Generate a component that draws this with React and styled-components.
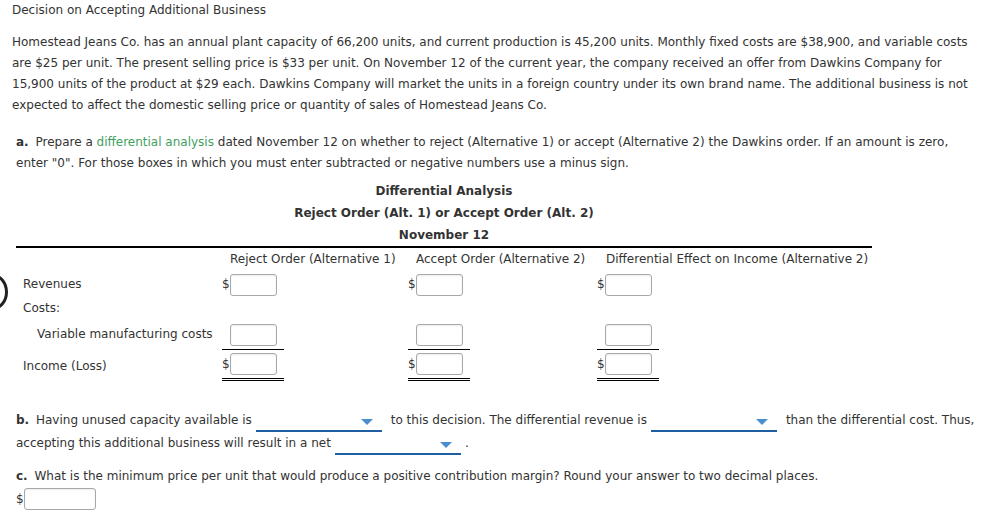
import styled, { createGlobalStyle } from "styled-components";

const GlobalStyle = createGlobalStyle`
  body {
    margin: 0;
    background: #fff;
    font-family: "DejaVu Sans", Verdana, sans-serif;
    font-size: 12px;
    color: #333;
  }
`;

const Page = styled.div`
  position: relative;
  padding: 1px 6px 0 12px;
  overflow: hidden;
  height: 529px;
`;

const SideRing = styled.div`
  position: absolute;
  left: -22px;
  top: 274px;
  width: 24px;
  height: 30px;
  border: 3px solid #222;
  border-radius: 50%;
`;

const Title = styled.div`
  line-height: 19px;
`;

const Para = styled.p`
  margin: 12px 0 0;
  line-height: 21px;
`;

const Part = styled.div`
  padding-left: 4px;
  margin-top: ${(p) => p.$top || 0}px;
  line-height: ${(p) => p.$lh || 21}px;
`;

const Letter = styled.b`
  margin-right: 3px;
`;

const Link = styled.span`
  color: #3f9f5f;
`;

const Heading = styled.div`
  width: 856px;
  text-align: center;
  font-weight: bold;
  line-height: 22px;
  &:first-child {
    margin-top: 6px;
  }
`;

const Table = styled.div`
  width: 856px;
`;

const Rule = styled.div`
  height: 2px;
  background: #000;
`;

const Row = styled.div`
  display: flex;
  align-items: center;
  height: ${(p) => p.$h}px;
`;

const Label = styled.div`
  width: ${(p) => (p.$indent ? 185 : 199)}px;
  padding-left: ${(p) => (p.$indent ? 21 : 7)}px;
  white-space: nowrap;
  margin-top: ${(p) => p.$shift || 0}px;
`;

const Col = styled.div`
  width: ${(p) => p.$w}px;
  padding-left: ${(p) => p.$pad || 0}px;
  box-sizing: border-box;
  white-space: nowrap;
`;

const Amount = styled.div`
  display: inline-flex;
  align-items: center;
  width: 62px;
  box-sizing: border-box;
  padding-bottom: ${(p) => (p.$line ? 3 : 0)}px;
  border-bottom: ${(p) =>
    p.$line === "double" ? "3px double #000" : p.$line ? "1px solid #000" : "none"};
`;

const Dollar = styled.span`
  width: 8px;
  font-size: 12px;
  color: #333;
`;

const Box = styled.div`
  width: 47px;
  height: 22px;
  box-sizing: border-box;
  border: 1px solid #a8a8a8;
  border-radius: 3px;
  background: #fff;
  box-shadow: inset 0 1px 2px rgba(0, 0, 0, 0.08);
`;

const WideBox = styled(Box)`
  width: 72px;
`;

const Select = styled.span`
  display: inline-block;
  position: relative;
  width: ${(p) => p.$w || 126}px;
  height: 16px;
  margin: 0 ${(p) => p.$mr ?? 9}px 0 ${(p) => p.$ml ?? 4}px;
  border-bottom: 2px solid #1d5fa0;
  vertical-align: -8px;

  &::after {
    content: "";
    position: absolute;
    right: 9px;
    top: 5px;
    border-left: 6px solid transparent;
    border-right: 6px solid transparent;
    border-top: 6px solid #4a8ed0;
  }
`;

const Cell = ({ dollar, line }) => (
  <Amount $line={line}>
    <Dollar>{dollar ? "$" : ""}</Dollar>
    <Box />
  </Amount>
);

const cols = [186, 189, 275];

const AmountRow = ({ h, label, indent, dollar, line, shift }) => (
  <Row $h={h}>
    <Label $indent={indent} $shift={shift}>
      {label}
    </Label>
    {cols.map((w, i) => (
      <Col key={i} $w={w}>
        <Cell dollar={dollar} line={line} />
      </Col>
    ))}
  </Row>
);

export default function App() {
  return (
    <Page>
      <GlobalStyle />
      <SideRing />
      <Title>Decision on Accepting Additional Business</Title>
      <Para>
        Homestead Jeans Co. has an annual plant capacity of 66,200 units, and current production is
        45,200 units. Monthly fixed costs are $38,900, and variable costs
        <br />
        are $25 per unit. The present selling price is $33 per unit. On November 12 of the current
        year, the company received an offer from Dawkins Company for
        <br />
        15,900 units of the product at $29 each. Dawkins Company will market the units in a foreign
        country under its own brand name. The additional business is not
        <br />
        expected to affect the domestic selling price or quantity of sales of Homestead Jeans Co.
      </Para>

      <Part $top={16}>
        <Letter>a.</Letter> Prepare a <Link>differential analysis</Link> dated November 12 on
        whether to reject (Alternative 1) or accept (Alternative 2) the Dawkins order. If an amount
        is zero,
        <br />
        enter "0". For those boxes in which you must enter subtracted or negative numbers use a
        minus sign.
        <Table>
          <Heading>Differential Analysis</Heading>
          <Heading>Reject Order (Alt. 1) or Accept Order (Alt. 2)</Heading>
          <Heading>November 12</Heading>
          <Rule />
          <Row $h={23}>
            <Label />
            <Col $w={186} $pad={8}>Reject Order (Alternative 1)</Col>
            <Col $w={189} $pad={8}>Accept Order (Alternative 2)</Col>
            <Col $w={275} $pad={9}>Differential Effect on Income (Alternative 2)</Col>
          </Row>
          <AmountRow h={27} label="Revenues" dollar />
          <Row $h={21}>
            <Label>Costs:</Label>
          </Row>
          <AmountRow h={32} label="Variable manufacturing costs" indent line shift={-2} />
          <AmountRow h={32} label="Income (Loss)" dollar line="double" shift={-2} />
        </Table>
      </Part>

      <Part $top={26} $lh={23}>
        <Letter>b.</Letter> Having unused capacity available is
        <Select />
        to this decision. The differential revenue is
        <Select />
        than the differential cost. Thus,
        <br />
        accepting this additional business will result in a net
        <Select $mr={4} />.
      </Part>

      <Part $top={11} $lh={21}>
        <Letter>c.</Letter> What is the minimum price per unit that would produce a positive
        contribution margin? Round your answer to two decimal places.
        <Row $h={24}>
          <Dollar>$</Dollar>
          <WideBox />
        </Row>
      </Part>
    </Page>
  );
}
